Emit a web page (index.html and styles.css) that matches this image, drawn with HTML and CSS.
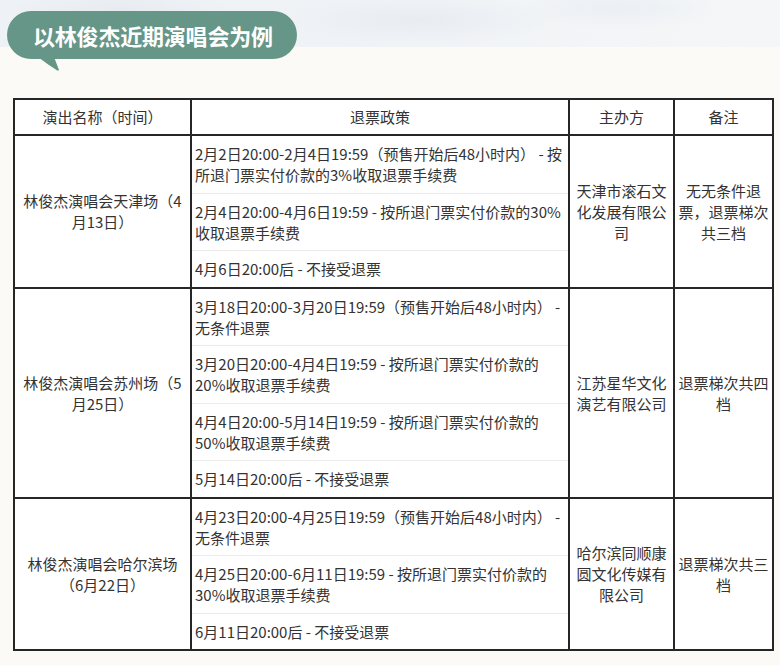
FILE: index.html
```html
<!DOCTYPE html>
<html lang="zh-CN">
<head>
<meta charset="utf-8">
<title>以林俊杰近期演唱会为例</title>
<link rel="stylesheet" href="styles.css">
</head>
<body>
<div class="hero">
  <div class="bubble">
    <span class="bubble-text">以林俊杰近期演唱会为例</span>
    <svg class="bubble-tail" width="26" height="16" viewBox="0 0 26 16" aria-hidden="true">
      <path d="M0 0 L16 0 L21 13 Q20 14 18.5 13 Q9 7 0 0 Z" fill="#659687"/>
    </svg>
  </div>
</div>

<table class="policy-table">
  <colgroup>
    <col class="c-name">
    <col class="c-policy">
    <col class="c-org">
    <col class="c-note">
  </colgroup>
  <thead>
    <tr>
      <th>演出名称（时间）</th>
      <th>退票政策</th>
      <th>主办方</th>
      <th>备注</th>
    </tr>
  </thead>
  <tbody>
    <tr>
      <td class="name">林俊杰演唱会天津场（4月13日）</td>
      <td class="policy">
        <div class="item">2月2日20:00-2月4日19:59（预售开始后48小时内） - 按<br>所退门票实付价款的3%收取退票手续费</div>
        <div class="item">2月4日20:00-4月6日19:59 - 按所退门票实付价款的30%<br>收取退票手续费</div>
        <div class="item">4月6日20:00后 - 不接受退票</div>
      </td>
      <td class="org">天津市滚石文化发展有限公司</td>
      <td class="note">无无条件退票，退票梯次共三档</td>
    </tr>
    <tr>
      <td class="name">林俊杰演唱会苏州场（5月25日）</td>
      <td class="policy">
        <div class="item">3月18日20:00-3月20日19:59（预售开始后48小时内） -<br>无条件退票</div>
        <div class="item">3月20日20:00-4月4日19:59 - 按所退门票实付价款的<br>20%收取退票手续费</div>
        <div class="item">4月4日20:00-5月14日19:59 - 按所退门票实付价款的<br>50%收取退票手续费</div>
        <div class="item">5月14日20:00后 - 不接受退票</div>
      </td>
      <td class="org">江苏星华文化演艺有限公司</td>
      <td class="note">退票梯次共四档</td>
    </tr>
    <tr>
      <td class="name">林俊杰演唱会哈尔滨场（6月22日）</td>
      <td class="policy">
        <div class="item">4月23日20:00-4月25日19:59（预售开始后48小时内） -<br>无条件退票</div>
        <div class="item">4月25日20:00-6月11日19:59 - 按所退门票实付价款的<br>30%收取退票手续费</div>
        <div class="item">6月11日20:00后 - 不接受退票</div>
      </td>
      <td class="org">哈尔滨同顺康圆文化传媒有限公司</td>
      <td class="note">退票梯次共三档</td>
    </tr>
  </tbody>
</table>
</body>
</html>
```

FILE: styles.css
```css
html, body {
  margin: 0;
  padding: 0;
}

body {
  width: 780px;
  height: 665px;
  overflow: hidden;
  background-color: #fcfaf6;
  font-family: "Noto Sans CJK SC", "Noto Sans", sans-serif;
  color: #333;
}

.hero {
  height: 47px;
  box-sizing: border-box;
  padding: 11px 0 0 7px;
  background-color: #f1f3f6;
  background-image:
    radial-gradient(ellipse 160px 30px at 120px 10px, rgba(228, 233, 239, 0.7), rgba(228, 233, 239, 0) 70%),
    radial-gradient(ellipse 200px 35px at 420px 20px, rgba(226, 232, 239, 0.6), rgba(226, 232, 239, 0) 70%),
    radial-gradient(ellipse 140px 30px at 620px 8px, rgba(230, 235, 240, 0.6), rgba(230, 235, 240, 0) 70%),
    linear-gradient(90deg, #eef1f5 0%, #f0f3f6 50%, #f5f6f8 100%);
}

.bubble {
  position: relative;
  display: inline-flex;
  align-items: center;
  height: 48px;
  padding: 0 24px 0 26px;
  border-radius: 24px;
  background: #659687;
}

.bubble-text {
  font-size: 22px;
  font-weight: 700;
  color: #fff;
  line-height: 1;
  letter-spacing: -0.2px;
}

.bubble-tail {
  position: absolute;
  left: 31px;
  top: 46px;
  display: block;
}

.policy-table {
  margin: 51px 0 0 13px;
  width: 759px;
  border-collapse: collapse;
  table-layout: fixed;
  background: #fff;
  font-size: 15px;
  line-height: 21px;
}

.c-name { width: 177px; }
.c-policy { width: 378px; }
.c-org { width: 105px; }
.c-note { width: 99px; }

.policy-table th,
.policy-table td {
  border: 2px solid #262626;
  vertical-align: middle;
  text-align: center;
}

.policy-table th {
  font-weight: 400;
  padding: 6px 4px 7px;
}

.policy-table td.name {
  padding: 0 7px;
}

.policy-table td.org {
  padding: 0 4px;
}

.policy-table td.note {
  padding: 0 2px;
}

.policy-table td.policy {
  padding: 0;
  text-align: left;
}

.item {
  padding: 7px 2px 7.5px 3px;
  border-top: 1px solid #ececec;
}

.item:first-child {
  border-top: 0;
}
```
